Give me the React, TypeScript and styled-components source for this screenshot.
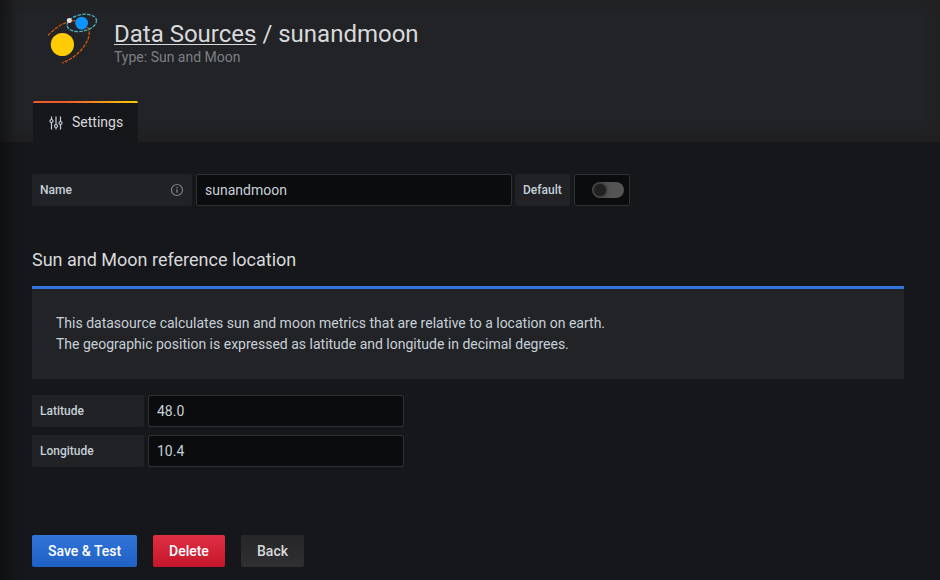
import React from 'react';
import styled, { createGlobalStyle } from 'styled-components';

const GlobalStyle = createGlobalStyle`
  * { box-sizing: border-box; }
  body {
    margin: 0;
    background: #16171a;
    color: #d8d9da;
    font-family: Roboto, "Liberation Sans", sans-serif;
    font-size: 14px;
    line-height: 21px;
    overflow: hidden;
  }
`;

const Page = styled.div`
  position: relative;
  width: 940px;
  height: 580px;
  overflow: hidden;
`;

/* Shadow cast by the side menu over the left edge of the page. */
const SideShadow = styled.div`
  position: absolute;
  top: -40px;
  bottom: -40px;
  left: -10px;
  width: 10px;
  box-shadow: 0 0 20px #000;
  z-index: 1;
`;

const Header = styled.header`
  display: flex;
  flex-direction: column;
  justify-content: space-between;
  height: 142px;
  padding: 8px 32px 0 33px;
  background: #222326;
  box-shadow: inset 0 -4px 14px #1f1f20;
`;

const Heading = styled.div`
  display: flex;
`;

const Logo = styled.svg`
  display: block;
  width: 60px;
  height: 60px;
  margin: 0 12px 0 9px;
`;

const Title = styled.h1`
  margin: 9px 0 0;
  font-size: 24px;
  font-weight: 400;
  line-height: 34px;
`;

const TitleLink = styled.a`
  text-decoration: underline;
  text-decoration-thickness: 1px;
  text-underline-offset: 2px;
`;

const Subtitle = styled.div`
  margin-top: -4px;
  color: #7b8087;
`;

const Tab = styled.div`
  display: flex;
  align-items: center;
  gap: 8px;
  align-self: flex-start;
  width: 105px;
  height: 41px;
  padding: 2px 0 0 15px;
  border-radius: 2px 2px 0 0;
  background: linear-gradient(to right, #f05a28 30%, #fbca0a 99%) top / 100% 2px no-repeat #16171a;
`;

const TabIcon = styled.svg`
  width: 16px;
  height: 16px;
  fill: none;
  stroke: #c7d0d9;
  stroke-width: 1.2;
`;

const Content = styled.main`
  display: flex;
  flex-direction: column;
  padding: 32px 36px 0 32px;
`;

const Row = styled.div`
  display: flex;
  gap: 4px;
  margin-bottom: 8px;
`;

const Label = styled.label<{ $width: number }>`
  display: flex;
  align-items: center;
  justify-content: space-between;
  width: ${(p) => p.$width}px;
  height: 32px;
  padding: 0 8px;
  border-radius: 2px;
  background: #202226;
  color: #c7d0d9;
  font-size: 12px;
  font-weight: 500;
`;

const InfoIcon = styled.svg`
  width: 14px;
  height: 14px;
  fill: none;
  stroke: #7b8087;
  stroke-width: 1.2;
`;

const Input = styled.input<{ $width: number }>`
  width: ${(p) => p.$width}px;
  height: 32px;
  padding: 0 8px;
  border: 1px solid #2c3235;
  border-radius: 2px;
  outline: none;
  background: #0b0c0e;
  color: #c7d0d9;
  font: 14px Roboto, "Liberation Sans", sans-serif;
`;

const DefaultGroup = styled.div`
  display: flex;
  gap: 4px;
  margin-left: -1px;
`;

const SwitchBox = styled.div`
  display: flex;
  align-items: center;
  justify-content: flex-end;
  width: 56px;
  height: 32px;
  padding-right: 5px;
  border: 1px solid #2c3235;
  border-radius: 2px;
  background: #0b0c0e;
`;

const SwitchTrack = styled.div`
  display: flex;
  align-items: center;
  width: 32px;
  height: 16px;
  padding-left: 2px;
  border-radius: 8px;
  background: #545454;
`;

const SwitchKnob = styled.div`
  width: 12px;
  height: 12px;
  border-radius: 50%;
  background: #202020;
  box-shadow: 0 0 4px #111;
`;

const SectionTitle = styled.h3`
  margin: 33px 0 14px;
  font-size: 18px;
  font-weight: 400;
  line-height: 25px;
`;

const InfoBox = styled.div`
  height: 93px;
  margin-bottom: 16px;
  padding: 24px;
  border-top: 3px solid #3274d9;
  background: #222326;
  color: #c7d0d9;
`;

const Buttons = styled.div`
  display: flex;
  gap: 16px;
  margin-top: 60px;
`;

const Button = styled.button<{ $width: number; $from: string; $to: string; $color?: string }>`
  width: ${(p) => p.$width}px;
  height: 32px;
  padding: 0 0 0 16px;
  border: 0;
  border-radius: 2px;
  background: linear-gradient(${(p) => p.$from}, ${(p) => p.$to});
  color: ${(p) => p.$color ?? '#fff'};
  font: 500 14px Roboto, "Liberation Sans", sans-serif;
  text-align: left;
  white-space: nowrap;
`;

const SunMoonLogo = () => (
  <Logo viewBox="42 8 60 60">
    <g fill="none" strokeWidth="1.3">
      <path
        d="M48 35.5C54 29 61 24 69 21.5Q73 20.3 77 20.8M87.5 27C91 33 89 40 82 49Q74 58.5 62 63"
        stroke="#d0560c"
        strokeDasharray="3.6 1.1"
      />
      <ellipse cx="81.8" cy="22.9" rx="14.9" ry="8.3" transform="rotate(-12 81.8 22.9)" stroke="#49aebd" strokeDasharray="3.6 1.2" />
    </g>
    <circle cx="62.4" cy="44.5" r="11.6" fill="#ffcb05" />
    <circle cx="81.6" cy="23.1" r="6.4" fill="#0c94fb" />
    <circle cx="69.3" cy="20.6" r="2.5" fill="#e4e4e4" />
  </Logo>
);

export default function App() {
  return (
    <>
      <GlobalStyle />
      <Page>
        <SideShadow />
        <Header>
          <Heading>
            <SunMoonLogo />
            <div>
              <Title>
                <TitleLink>Data Sources</TitleLink> / sunandmoon
              </Title>
              <Subtitle>Type: Sun and Moon</Subtitle>
            </div>
          </Heading>
          <Tab>
            <TabIcon viewBox="0 0 16 16">
              <path d="M3.5 1.5v3M3.5 7.5v7M8 1.5v8M8 12.5v2M12.5 1.5v5M12.5 9.5v5" />
              <circle cx="3.5" cy="6" r="1.5" />
              <circle cx="8" cy="11" r="1.5" />
              <circle cx="12.5" cy="8" r="1.5" />
            </TabIcon>
            Settings
          </Tab>
        </Header>
        <Content>
          <Row>
            <Label $width={160}>
              Name
              <InfoIcon viewBox="0 0 14 14">
                <circle cx="7" cy="7" r="5.5" />
                <path d="M7 6.3v3.4M7 4v1.3" strokeWidth="1.4" />
              </InfoIcon>
            </Label>
            <Input $width={316} defaultValue="sunandmoon" />
            <DefaultGroup>
              <Label $width={55}>Default</Label>
              <SwitchBox>
                <SwitchTrack>
                  <SwitchKnob />
                </SwitchTrack>
              </SwitchBox>
            </DefaultGroup>
          </Row>
          <SectionTitle>Sun and Moon reference location</SectionTitle>
          <InfoBox>
            This datasource calculates sun and moon metrics that are relative to a location on earth.
            <br />
            The geographic position is expressed as latitude and longitude in decimal degrees.
          </InfoBox>
          <Row>
            <Label $width={112}>Latitude</Label>
            <Input $width={256} defaultValue="48.0" />
          </Row>
          <Row>
            <Label $width={112}>Longitude</Label>
            <Input $width={256} defaultValue="10.4" />
          </Row>
          <Buttons>
            <Button $width={105} $from="#3274d9" $to="#1f60c4">Save &amp; Test</Button>
            <Button $width={72} $from="#e02f44" $to="#c4162a">Delete</Button>
            <Button $width={63} $from="#262628" $to="#303032" $color="#d8d9da">Back</Button>
          </Buttons>
        </Content>
      </Page>
    </>
  );
}
